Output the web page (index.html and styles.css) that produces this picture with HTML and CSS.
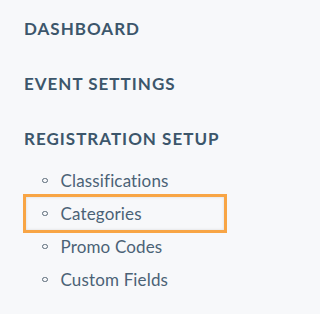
FILE: index.html
```html
<!DOCTYPE html>
<html>
<head>
<meta charset="utf-8">
<link rel="stylesheet" href="styles.css">
</head>
<body>
<nav class="sidenav">
  <div class="section">DASHBOARD</div>
  <div class="section">EVENT SETTINGS</div>
  <div class="section">REGISTRATION SETUP</div>
  <ul class="sublist">
    <li class="subitem"><span class="bullet"></span>Classifications</li>
    <li class="subitem active"><span class="bullet"></span>Categories</li>
    <li class="subitem"><span class="bullet"></span>Promo Codes</li>
    <li class="subitem"><span class="bullet"></span>Custom Fields</li>
  </ul>
</nav>
</body>
</html>
```
FILE: styles.css
```css
html, body {
  margin: 0;
  padding: 0;
  background: #f7f8fa;
}
.sidenav {
  display: flex;
  flex-direction: column;
  padding: 18px 0 0 24px;
  font-family: Lato, "Liberation Sans", sans-serif;
}
.section {
  font-size: 17px;
  font-weight: 700;
  line-height: 22px;
  color: #3c566b;
  letter-spacing: 1px;
  margin-bottom: 33px;
}
.section:nth-of-type(3) {
  margin-bottom: 14px;
}
.sublist {
  list-style: none;
  margin: 0;
  padding: 0;
  display: flex;
  flex-direction: column;
}
.subitem {
  display: flex;
  align-items: center;
  height: 33px;
  margin-left: -1px;
  width: 204px;
  box-sizing: border-box;
  padding-left: 19px;
  font-size: 17px;
  letter-spacing: 0.15px;
  color: #4b6276;
}
.subitem.active {
  border: 3px solid #f8a545;
  box-shadow: inset 0 0 3px rgba(0,0,0,0.12);
  padding-left: 16px;
  height: 39px;
  margin: -3px 0 -3px -1px;
}
.bullet {
  width: 3.5px;
  height: 3.5px;
  border: 1.5px solid #5a6a78;
  border-radius: 50%;
  margin-right: 13px;
  flex: none;
}
```
